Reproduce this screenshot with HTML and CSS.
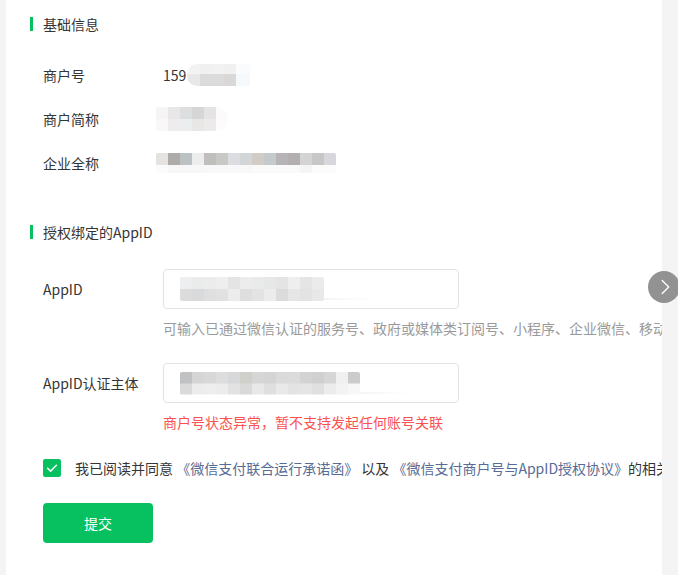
FILE: index.html
```html
<!DOCTYPE html>
<html lang="zh-CN">
<head>
<meta charset="utf-8">
<title>授权绑定AppID</title>
<link rel="stylesheet" href="styles.css">
</head>
<body>
<div class="page">
  <div class="gutter-left"></div>
  <main class="content">
    <h2 class="sec-title first">基础信息</h2>
    <div class="info-rows">
      <div class="info-row">
        <span class="label">商户号</span>
        <span class="value"><span class="num">159</span><span class="mosaic m-id"></span></span>
      </div>
      <div class="info-row">
        <span class="label">商户简称</span>
        <span class="value shift"><span class="mosaic m-short"></span></span>
      </div>
      <div class="info-row">
        <span class="label">企业全称</span>
        <span class="value shift"><span class="mosaic m-full"></span></span>
      </div>
    </div>

    <h2 class="sec-title second">授权绑定的AppID</h2>

    <div class="form-item">
      <div class="form-line">
        <label class="label">AppID</label>
        <div class="input"><span class="mosaic m-appid"></span><span class="trail"></span></div>
      </div>
      <p class="tip">可输入已通过微信认证的服务号、政府或媒体类订阅号、小程序、企业微信、移动应用、网站应用的AppID</p>
    </div>

    <div class="form-item second-item">
      <div class="form-line">
        <label class="label">AppID认证主体</label>
        <div class="input"><span class="mosaic m-subj"></span><span class="trail"></span></div>
      </div>
      <p class="tip error">商户号状态异常，暂不支持发起任何账号关联</p>
    </div>

    <div class="agree">
      <span class="checkbox">
        <svg viewBox="0 0 18 18" width="18" height="18"><path d="M4.6 9.2 L7.6 12.1 L13.4 6.2" fill="none" stroke="#fff" stroke-width="1.5" stroke-linecap="round" stroke-linejoin="round"/></svg>
      </span>
      <span class="agree-text">我已阅读并同意 <a class="link">《微信支付联合运行承诺函》</a> 以及 <a class="link">《微信支付商户号与AppID授权协议》</a>的相关条款</span>
    </div>

    <button class="btn-primary">提交</button>
  </main>
  <div class="gutter-right"></div>
  <div class="next-arrow">
    <svg viewBox="0 0 32 32" width="32" height="32"><path d="M13 9 L20 16 L13 23" fill="none" stroke="#fff" stroke-width="1.4" stroke-linecap="round" stroke-linejoin="round"/></svg>
  </div>
</div>
</body>
</html>
```

FILE: styles.css
```css
* { box-sizing: border-box; }
html, body { margin: 0; padding: 0; }
body {
  font-family: "Microsoft YaHei", "Noto Sans CJK SC", "Noto Sans", sans-serif;
  font-size: 14px;
  color: #353535;
  background: #f4f4f4;
  height: 575px;
  overflow: hidden;
}
.page {
  position: relative;
  display: flex;
  height: 575px;
}
.gutter-left { width: 6px; flex: none; background: #f4f4f4; }
.gutter-right { width: 16px; flex: none; background: #f4f4f4; }
.content {
  flex: 1;
  min-width: 0;
  background: #fff;
  padding-left: 24px;
  overflow: hidden;
  white-space: nowrap;
}

.sec-title {
  margin: 0;
  font-size: 14px;
  font-weight: normal;
  line-height: 14px;
  height: 14px;
  border-left: 3px solid #07c160;
  padding-left: 10px;
  color: #353535;
}
.sec-title.first { margin-top: 17px; }
.sec-title.second { margin-top: 40px; }

.info-rows { margin-top: 22px; }
.info-row {
  display: flex;
  align-items: center;
  height: 44px;
  padding-left: 13px;
}
.label {
  width: 120px;
  flex: none;
  color: #353535;
}
.value {
  display: flex;
  align-items: center;
}
.value.shift { margin-left: -7px; }
.num { color: #353535; }

.mosaic { display: inline-block; border-radius: 2px; }
.m-id {
  width: 63px; height: 22px; margin-left: 1px;
  border-radius: 10px 2px 2px 10px;
  background:
    linear-gradient(to right, #f3f3f3 0 13px, #f0f0f0 13px 25px, #f2f2f2 25px 37px, #f1f0f0 37px 49px, #fafbfd 49px) top / 100% 45% no-repeat,
    linear-gradient(to right, #e8e8e8 0 13px, #dcdbdb 13px 25px, #dcdbdb 25px 37px, #d9d7d7 37px 49px, #f6f9fc 49px) bottom / 100% 55% no-repeat;
}
.m-short {
  width: 72px; height: 24px;
  border-radius: 2px 12px 12px 2px;
  background:
    linear-gradient(to right, #f5f5f5 0 12px, #e8e6e6 12px 24px, #dcdee0 24px 36px, #d6d5d7 36px 48px, #e5e4e3 48px 60px, #fbfbfb 60px) top / 100% 50% no-repeat,
    linear-gradient(to right, #f8f8f8 0 12px, #eeecec 12px 24px, #ebedee 24px 36px, #e8e7e6 36px 48px, #eceaeb 48px 60px, #fcfcfc 60px) bottom / 100% 50% no-repeat;
}
.m-full {
  width: 180px; height: 20px;
  background:
    linear-gradient(to right, #e6e2df 0 12px, #aeacab 12px 24px, #bcc1c4 24px 36px, #eceded 36px 48px, #c1bfbd 48px 60px, #c8c8c4 60px 72px, #dcdde1 72px 84px, #d3d6d7 84px 96px, #d1ccc6 96px 108px, #c4c9cb 108px 120px, #b7b4b8 120px 132px, #b3aeb0 132px 144px, #d4d4d4 144px 156px, #c8c7c8 156px 168px, #d9d7de 168px) top / 100% 60% no-repeat,
    linear-gradient(to right, #fbfbfb 0 12px, #f7f7f7 12px 48px, #f8f8f8 48px 96px, #fafafa 96px 144px, #f5f5f5 144px 156px, #fbfbfb 156px) bottom / 100% 40% no-repeat;
}

.form-item { margin-top: 30px; padding-left: 13px; }
.form-item.second-item { margin-top: 24px; }
.form-line { display: flex; align-items: center; }
.input {
  position: relative;
  width: 296px;
  height: 40px;
  border: 1px solid #e2e2e2;
  border-radius: 4px;
  background: #fff;
  display: flex;
  align-items: center;
  padding-left: 16px;
}
.m-appid {
  width: 144px; height: 24px;
  background:
    linear-gradient(to right, #eceef0 0 12px, #eaebeb 12px 24px, #ececec 24px 36px, #eeeeef 36px 48px, #e4e4e4 48px 60px, #ececec 60px 72px, #e9eaea 72px 84px, #e7e7e7 84px 96px, #e4e4e4 96px 108px, #eeeeee 108px 120px, #e5e5e5 120px 132px, #ebebeb 132px) top / 100% 50% no-repeat,
    linear-gradient(to right, #dcdcdc 0 12px, #d9dadb 12px 24px, #dfdfdf 24px 36px, #e1e1e1 36px 48px, #ececec 48px 60px, #dedede 60px 72px, #e3e3e3 72px 84px, #ececec 84px 96px, #dbdbdb 96px 108px, #e6e6e6 108px 120px, #e3e3e3 120px 132px, #e8e8e8 132px) bottom / 100% 50% no-repeat;
}
.m-subj {
  width: 180px; height: 23px;
  background:
    linear-gradient(to right, #bfc1c3 0 12px, #d5d5d5 12px 24px, #d8d8d8 24px 36px, #dddddd 36px 48px, #d7d8d9 48px 60px, #d0d0cb 60px 72px, #d6d6d6 72px 84px, #d4d4d4 84px 96px, #dadada 96px 108px, #dbdbdb 108px 120px, #d3d2d5 120px 132px, #d0d0d0 132px 144px, #d6d6d6 144px 156px, #f0f0f0 156px 168px, #cdcacc 168px) top / 100% 50% no-repeat,
    linear-gradient(to right, #dadada 0 12px, #ececec 12px 24px, #eeeeee 24px 36px, #ececec 36px 48px, #e2e2e2 48px 60px, #d9d9d9 60px 72px, #e8e8e8 72px 84px, #dfdfdf 84px 96px, #e9e9e9 96px 108px, #e3e3e3 108px 120px, #e5e5e5 120px 132px, #e0e0e0 132px 144px, #ececec 144px 156px, #f3f3f3 156px 168px, #f7f7f7 168px) bottom / 100% 50% no-repeat;
}
.trail {
  width: 50px; height: 2px;
  align-self: flex-end;
  margin-bottom: 8px;
  background: linear-gradient(to right, #f4f4f4, #fff);
}

.tip {
  margin: 8px 0 0 120px;
  line-height: 22px;
  color: #9a9a9a;
}
.tip.error { color: #fa5151; }

.agree {
  margin-top: 24px;
  padding-left: 13px;
  display: flex;
  align-items: center;
  height: 22px;
}
.checkbox {
  width: 18px;
  height: 18px;
  border-radius: 2px;
  background: #07c160;
  flex: none;
  display: flex;
}
.agree-text { margin-left: 14px; color: #353535; }
.link { color: #576b95; text-decoration: none; }

.btn-primary {
  display: block;
  margin: 24px 0 0 13px;
  width: 110px;
  height: 40px;
  border: 0;
  border-radius: 4px;
  background: #07c160;
  color: #fff;
  font-family: inherit;
  font-size: 14px;
  padding: 0;
}

.next-arrow {
  position: absolute;
  left: 648px;
  top: 271px;
  width: 32px;
  height: 32px;
  border-radius: 50%;
  background: #929292;
  display: flex;
  padding-left: 2px;
}
```
